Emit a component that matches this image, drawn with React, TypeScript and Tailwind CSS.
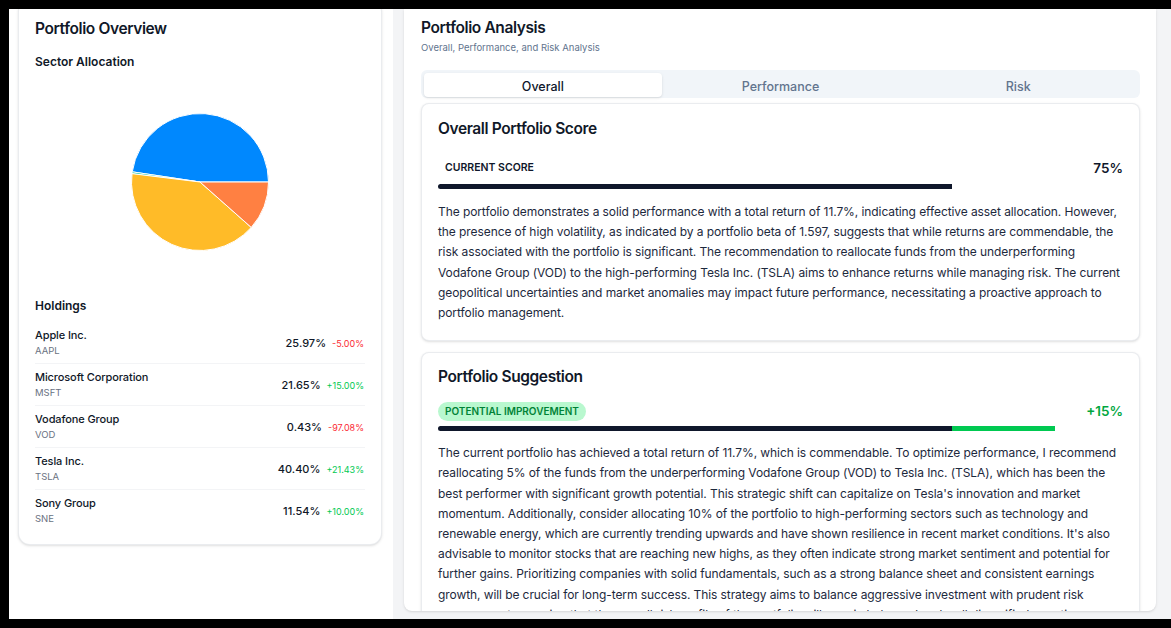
const holdings = [
  { name: 'Apple Inc.', ticker: 'AAPL', weight: '25.97%', change: '-5.00%', up: false },
  { name: 'Microsoft Corporation', ticker: 'MSFT', weight: '21.65%', change: '+15.00%', up: true },
  { name: 'Vodafone Group', ticker: 'VOD', weight: '0.43%', change: '-97.08%', up: false },
  { name: 'Tesla Inc.', ticker: 'TSLA', weight: '40.40%', change: '+21.43%', up: true },
  { name: 'Sony Group', ticker: 'SNE', weight: '11.54%', change: '+10.00%', up: true },
]

// sector slices, drawn counter-clockwise from 3 o'clock like recharts does
const sectors = [
  { name: 'Technology', value: 47.62, color: '#0088FE' },
  { name: 'Telecom', value: 0.43, color: '#00C49F' },
  { name: 'Automotive', value: 40.4, color: '#FFBB28' },
  { name: 'Consumer Electronics', value: 11.54, color: '#FF8042' },
]

const overallText =
  'The portfolio demonstrates a solid performance with a total return of 11.7%, indicating effective asset allocation. However, the presence of high volatility, as indicated by a portfolio beta of 1.597, suggests that while returns are commendable, the risk associated with the portfolio is significant. The recommendation to reallocate funds from the underperforming Vodafone Group (VOD) to the high-performing Tesla Inc. (TSLA) aims to enhance returns while managing risk. The current geopolitical uncertainties and market anomalies may impact future performance, necessitating a proactive approach to portfolio management.'

const suggestionText =
  "The current portfolio has achieved a total return of 11.7%, which is commendable. To optimize performance, I recommend reallocating 5% of the funds from the underperforming Vodafone Group (VOD) to Tesla Inc. (TSLA), which has been the best performer with significant growth potential. This strategic shift can capitalize on Tesla's innovation and market momentum. Additionally, consider allocating 10% of the portfolio to high-performing sectors such as technology and renewable energy, which are currently trending upwards and have shown resilience in recent market conditions. It's also advisable to monitor stocks that are reaching new highs, as they often indicate strong market sentiment and potential for further gains. Prioritizing companies with solid fundamentals, such as a strong balance sheet and consistent earnings growth, will be crucial for long-term success. This strategy aims to balance aggressive investment with prudent risk management, ensuring that the overall risk profile of the portfolio will remain balanced and well diversified over time."

function SectorPie() {
  const cx = 70
  const cy = 70
  const r = 68.5
  const total = sectors.reduce((s, x) => s + x.value, 0)
  let start = 0
  const point = (deg: number) => {
    const rad = (deg * Math.PI) / 180
    return [cx + r * Math.cos(rad), cy - r * Math.sin(rad)]
  }
  return (
    <svg width="140" height="140" viewBox="0 0 140 140">
      {sectors.map((s) => {
        const sweep = (s.value / total) * 360
        const [x1, y1] = point(start)
        const [x2, y2] = point(start + sweep)
        const large = sweep > 180 ? 1 : 0
        start += sweep
        return (
          <path
            key={s.name}
            d={`M${cx},${cy} L${x1},${y1} A${r},${r} 0 ${large} 0 ${x2},${y2} Z`}
            fill={s.color}
            stroke="#fff"
            strokeWidth={1}
          />
        )
      })}
    </svg>
  )
}

function PortfolioOverview() {
  return (
    <div className="-mt-[9px] ml-[9px] w-[364px] rounded-xl border border-gray-200/80 bg-white px-[16px] pt-[16px] pb-[13px] shadow-sm">
      <h2 className="text-[15.5px] leading-6 font-semibold tracking-tight text-gray-900">Portfolio Overview</h2>
      <h3 className="mt-[12px] text-[12px] leading-[18px] font-semibold text-gray-900">Sector Allocation</h3>
      <div className="mt-[2px] flex h-[218px] items-center justify-center">
        <SectorPie />
      </div>
      <h3 className="mt-[6px] text-[12px] leading-[18px] font-semibold text-gray-900">Holdings</h3>
      <div className="mt-[7px] flex flex-col divide-y divide-gray-100">
        {holdings.map((h) => (
          <div key={h.ticker} className="flex items-center justify-between pt-[5px] pb-[4px] pr-[1px]">
            <div>
              <div className="text-[11px] leading-4 font-medium tracking-[-0.01em] text-gray-900">{h.name}</div>
              <div className="text-[9.5px] leading-4 text-gray-500">{h.ticker}</div>
            </div>
            <div className="flex items-baseline gap-[6px]">
              <span className="text-[11px] font-medium text-gray-900">{h.weight}</span>
              <span className={h.up ? 'text-[9px] text-green-500' : 'text-[9px] text-red-500'}>{h.change}</span>
            </div>
          </div>
        ))}
      </div>
    </div>
  )
}

function Tabs() {
  const tabs = ['Overall', 'Performance', 'Risk']
  return (
    <div className="mt-[15px] grid h-[28px] grid-cols-3 rounded-md bg-slate-100 p-[3px]">
      {tabs.map((t, i) => (
        <div
          key={t}
          className={
            i === 0
              ? 'flex items-center justify-center rounded-sm bg-white pt-[5px] text-[12.5px] font-medium text-slate-900 shadow-sm'
              : 'flex items-center justify-center pt-[5px] text-[12.5px] font-medium text-slate-500'
          }
        >
          {t}
        </div>
      ))}
    </div>
  )
}

function ScoreCard() {
  return (
    <div className="mt-[5px] rounded-lg border border-gray-200/80 bg-white px-[16px] pt-[15px] pb-[17px] shadow-sm">
      <h3 className="text-[15.5px] leading-5 font-semibold tracking-tight text-gray-900">Overall Portfolio Score</h3>
      <div className="mt-[20px] flex h-[18px] items-center justify-between">
        <span className="rounded-full px-[7px] text-[10.5px] font-semibold text-slate-900">CURRENT SCORE</span>
        <span className="text-[13.5px] font-semibold text-slate-900">75%</span>
      </div>
      <div className="mt-[7px] flex h-[5px] overflow-hidden rounded-full">
        <div className="h-full bg-slate-900" style={{ width: '75%' }} />
      </div>
      <p className="mt-[13px] text-[12px] leading-[20.2px] tracking-[-0.007em] text-slate-800">{overallText}</p>
    </div>
  )
}

function SuggestionCard() {
  return (
    <div className="mt-[11px] rounded-lg border border-gray-200/80 bg-white px-[16px] pt-[14px] pb-[17px] shadow-sm">
      <h3 className="text-[15.5px] leading-5 font-semibold tracking-tight text-gray-900">Portfolio Suggestion</h3>
      <div className="mt-[15px] flex h-[18px] items-center justify-between">
        <span className="rounded-full bg-green-200 px-[7px] py-[2px] text-[10px] font-semibold text-green-700">
          POTENTIAL IMPROVEMENT
        </span>
        <span className="text-[13.5px] font-semibold text-green-600">+15%</span>
      </div>
      <div className="mt-[6px] flex h-[5px] overflow-hidden rounded-full">
        <div className="h-full bg-slate-900" style={{ width: '75%' }} />
        <div className="h-full bg-green-500" style={{ width: '15%' }} />
      </div>
      <p className="mt-[12px] text-[12px] leading-[20.2px] tracking-[-0.007em] text-slate-800">{suggestionText}</p>
    </div>
  )
}

export default function App() {
  return (
    <div
      className="h-[628px] w-[1171px] overflow-hidden bg-black pt-[9px] pb-[9px] pl-[9px]"
      style={{ fontFamily: 'Inter, "Noto Sans", sans-serif' }}
    >
      <div className="flex h-full overflow-hidden bg-gray-100">
        <aside className="h-full w-[384px] shrink-0 overflow-hidden bg-white">
          <PortfolioOverview />
        </aside>
        <main className="ml-[11px] mb-[8px] w-[752px] overflow-hidden rounded-b-lg bg-white px-[17px] pr-[16px] shadow-sm">
          <h2 className="mt-[7px] text-[15.5px] leading-6 font-semibold tracking-tight text-gray-900">Portfolio Analysis</h2>
          <p className="mt-[1px] text-[9.5px] leading-[14px] text-slate-500">Overall, Performance, and Risk Analysis</p>
          <Tabs />
          <ScoreCard />
          <SuggestionCard />
        </main>
      </div>
    </div>
  )
}
